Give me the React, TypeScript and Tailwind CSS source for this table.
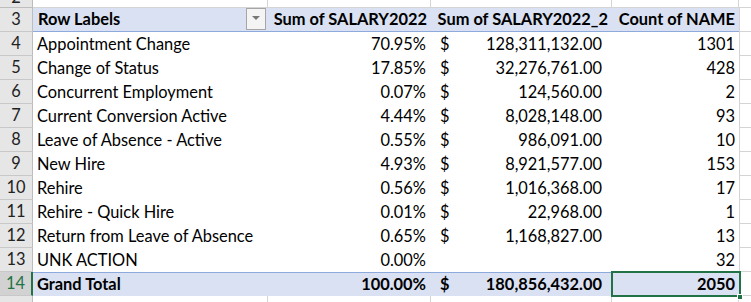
import React from 'react';

const rows = [
  { n: 4, label: 'Appointment Change', pct: '70.95%', amt: '128,311,132.00', count: '1301' },
  { n: 5, label: 'Change of Status', pct: '17.85%', amt: '32,276,761.00', count: '428' },
  { n: 6, label: 'Concurrent Employment', pct: '0.07%', amt: '124,560.00', count: '2' },
  { n: 7, label: 'Current Conversion Active', pct: '4.44%', amt: '8,028,148.00', count: '93' },
  { n: 8, label: 'Leave of Absence - Active', pct: '0.55%', amt: '986,091.00', count: '10' },
  { n: 9, label: 'New Hire', pct: '4.93%', amt: '8,921,577.00', count: '153' },
  { n: 10, label: 'Rehire', pct: '0.56%', amt: '1,016,368.00', count: '17' },
  { n: 11, label: 'Rehire - Quick Hire', pct: '0.01%', amt: '22,968.00', count: '1' },
  { n: 12, label: 'Return from Leave of Absence', pct: '0.65%', amt: '1,168,827.00', count: '13' },
  { n: 13, label: 'UNK ACTION', pct: '0.00%', amt: '', count: '32' },
];

function RowHead({ n, active }: { n: number | string; active?: boolean }) {
  return (
    <div
      className={`w-[33px] flex-shrink-0 flex items-center justify-center border-b border-[#c8c8c8] ${
        active ? 'bg-[#d2d2d2] text-[#217346] border-r-2 border-r-[#217346]' : 'bg-[#e6e6e6] text-[#222] border-r border-r-[#bdbdbd]'
      }`}
    >
      {n}
    </div>
  );
}

function GridRow({ top }: { top?: boolean }) {
  // empty worksheet row outside the pivot table, only a sliver is visible
  return (
    <div className="flex h-[8px] overflow-hidden">
      <div className="w-[33px] flex-shrink-0 flex justify-center items-start overflow-hidden bg-[#e6e6e6] text-[#222] border-r border-b border-[#bdbdbd]">
        {top && <span className="mt-[-11px]">2</span>}
      </div>
      <div className="w-[235px] border-r border-b border-[#d4d4d4]" />
      <div className="w-[163px] border-r border-b border-[#d4d4d4]" />
      <div className="w-[181px] border-r border-b border-[#d4d4d4]" />
      <div className="w-[127px] border-r border-b border-[#d4d4d4]" />
      <div className="flex-1 border-b border-[#d4d4d4]" />
    </div>
  );
}

export default function App() {
  return (
    <div
      className="w-[751px] h-[302px] overflow-hidden bg-white text-[16.4px] leading-none text-black"
      style={{ fontFamily: 'Lato, "Open Sans", sans-serif' }}
    >
      <GridRow top />

      {/* Header row */}
      <div className="flex h-[24px]">
        <RowHead n={3} />
        <div className="flex w-[706px] bg-[#d9e1f2] border-b border-[#8ea9db] font-bold items-center">
          <div className="w-[235px] flex items-center justify-between pl-[5px] pr-[2px] h-full">
            <span>Row Labels</span>
            <span className="w-[20px] h-[22px] mb-[2px] border border-[#a6a6a6] bg-[#f4f4f4] flex items-center justify-center">
              <svg width="8" height="5" viewBox="0 0 8 5">
                <path d="M0 0 L8 0 L4 4 Z" fill="#777" />
              </svg>
            </span>
          </div>
          <div className="w-[163px] text-right pr-[4px]">Sum of SALARY2022</div>
          <div className="w-[181px] text-right pr-[4px]">Sum of SALARY2022_2</div>
          <div className="w-[127px] text-right pr-[4px]">Count of NAME</div>
        </div>
        <div className="flex-1 border-l border-b border-[#d4d4d4]" />
      </div>

      {rows.map((r) => (
        <div key={r.n} className="flex h-[24px]">
          <RowHead n={r.n} />
          <div className="flex w-[706px] items-center">
            <div className="w-[235px] pl-[4px] whitespace-nowrap">{r.label}</div>
            <div className="w-[163px] text-right pr-[5px]">{r.pct}</div>
            <div className="w-[181px] flex justify-between pl-[9px] pr-[10px]">
              <span>{r.amt ? '$' : ''}</span>
              <span>{r.amt}</span>
            </div>
            <div className="w-[127px] text-right pr-[4px]">{r.count}</div>
          </div>
          <div className="flex-1 border-l border-b border-[#d4d4d4]" />
        </div>
      ))}

      {/* Grand total */}
      <div className="flex h-[24px] relative">
        <RowHead n={14} active />
        <div className="flex w-[706px] bg-[#d9e1f2] border-t border-[#8ea9db] font-bold items-center">
          <div className="w-[235px] pl-[4px]">Grand Total</div>
          <div className="w-[163px] text-right pr-[5px]">100.00%</div>
          <div className="w-[181px] flex justify-between pl-[9px] pr-[10px]">
            <span>$</span>
            <span>180,856,432.00</span>
          </div>
          <div className="w-[127px] text-right pr-[4px]">2050</div>
        </div>
        <div className="flex-1 border-l border-b border-[#d4d4d4]" />
        {/* active cell outline */}
        <div className="absolute left-[611px] top-[-1px] w-[130px] h-[26px] border-2 border-[#217346] pointer-events-none" />
        <div className="absolute left-[737px] top-[22px] w-[6px] h-[6px] bg-[#217346] border border-white" />
      </div>

      <GridRow />
    </div>
  );
}
